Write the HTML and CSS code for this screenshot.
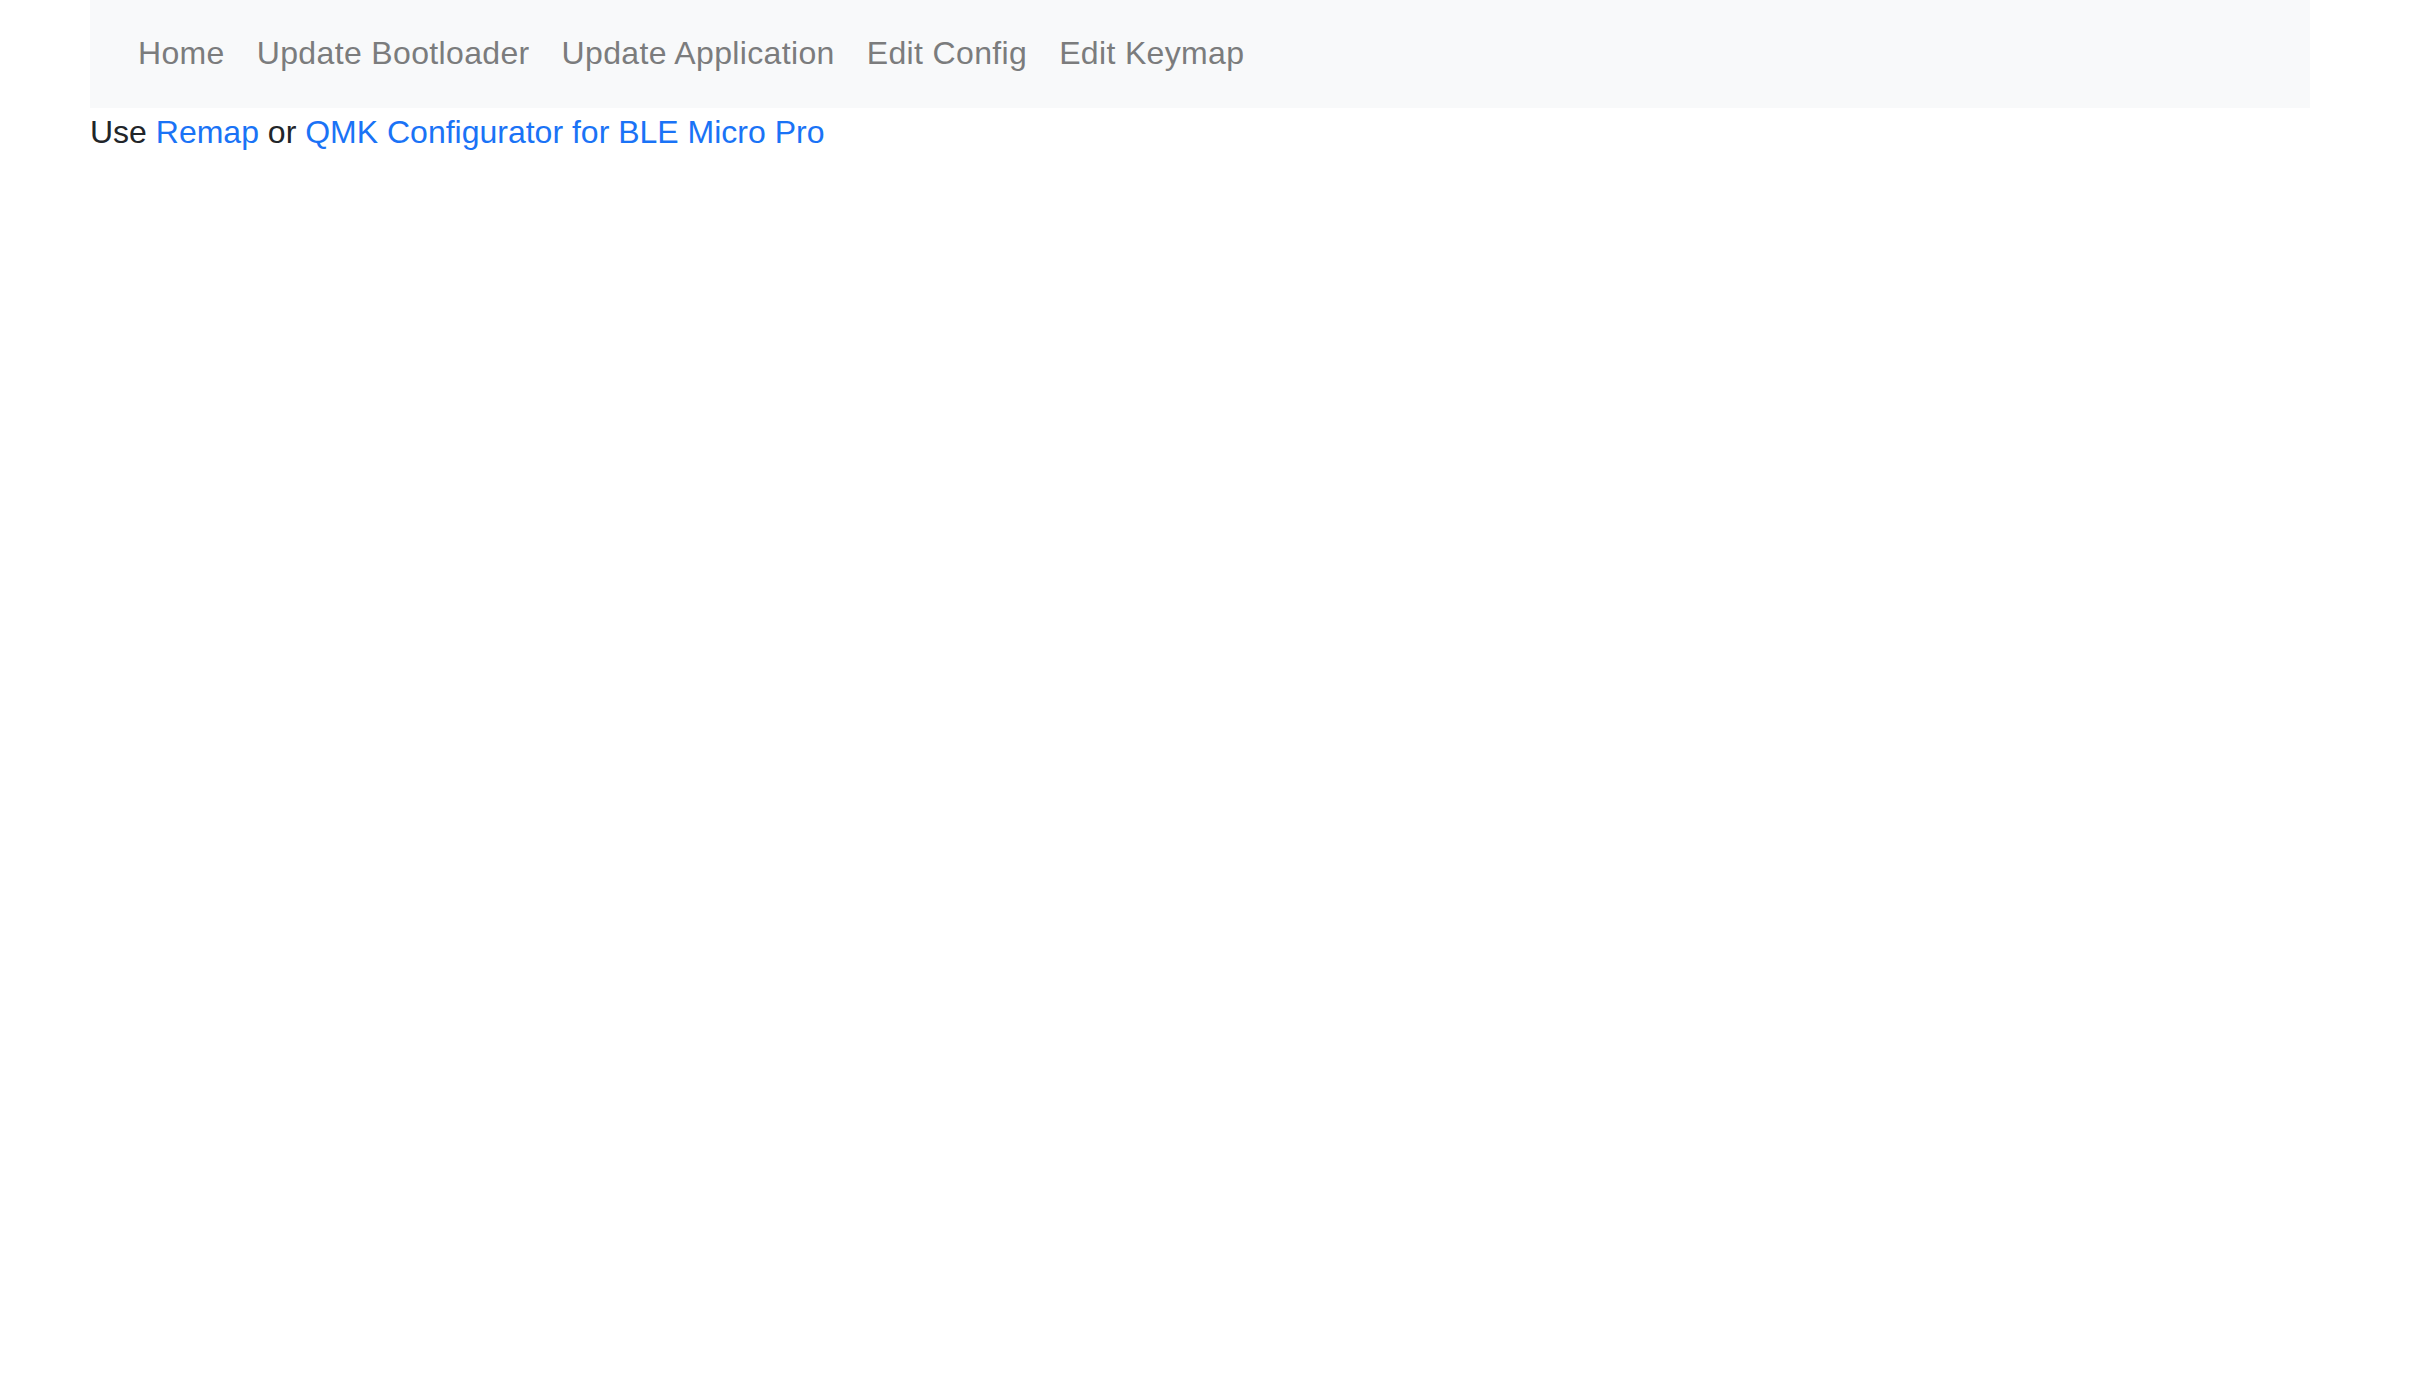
FILE: index.html
```html
<!DOCTYPE html>
<html lang="en">
<head>
<meta charset="utf-8">
<title>BLE Micro Pro Web Configurator</title>
<link rel="stylesheet" href="styles.css">
</head>
<body>
<div class="container">
  <nav class="navbar">
    <ul class="nav-list">
      <li><a class="nav-link" href="#">Home</a></li>
      <li><a class="nav-link" href="#">Update Bootloader</a></li>
      <li><a class="nav-link" href="#">Update Application</a></li>
      <li><a class="nav-link" href="#">Edit Config</a></li>
      <li><a class="nav-link" href="#">Edit Keymap</a></li>
    </ul>
  </nav>
  <p class="intro">Use <a class="link" href="#">Remap</a> or <a class="link" href="#">QMK Configurator for BLE Micro Pro</a></p>
</div>
</body>
</html>
```

FILE: styles.css
```css
html, body {
  margin: 0;
  padding: 0;
  background: #ffffff;
}
body {
  font-family: "Liberation Sans", Arial, sans-serif;
  font-size: 32px;
  line-height: 48px;
  color: #212529;
}
.container {
  margin-left: 90px;
  width: 2220px;
}
.navbar {
  background: #f8f9fa;
  padding: 14px 32px 15px;
}
.nav-list {
  list-style: none;
  margin: 0;
  padding: 0;
  display: flex;
}
.nav-link {
  display: block;
  padding: 15px 16px 16px;
  color: #7b7c7d;
  text-decoration: none;
  letter-spacing: 0.35px;
}
.intro {
  margin: 0;
}
.link {
  color: #1a73f6;
  text-decoration: none;
}
```
